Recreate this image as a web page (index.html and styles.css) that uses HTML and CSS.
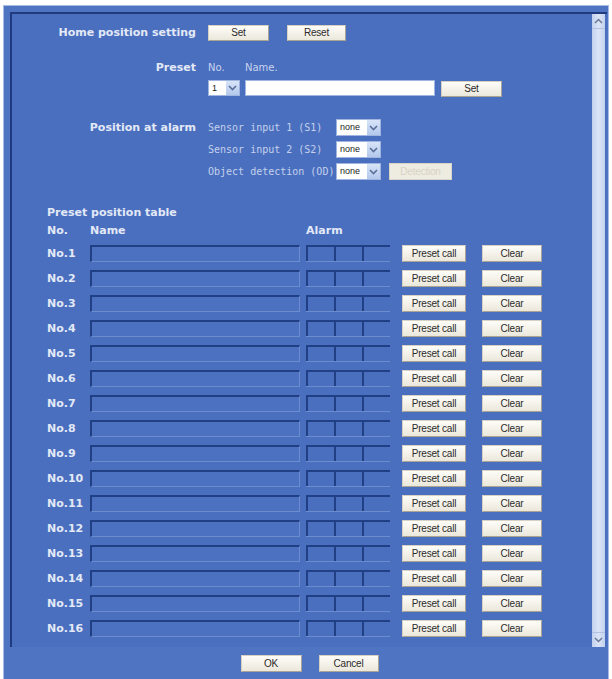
FILE: index.html
```html
<!DOCTYPE html>
<html lang="en">
<head>
<meta charset="utf-8">
<title>Preset position</title>
<link rel="stylesheet" href="styles.css">
</head>
<body>
<div class="window">
  <div class="viewport">
    <div class="content">
      <div class="settings">
        <div class="label row-home">Home position setting</div>
        <div class="controls row-home">
          <button class="btn btn-set">Set</button>
          <button class="btn btn-reset">Reset</button>
        </div>

        <div class="label row-preset">Preset</div>
        <div class="controls preset-controls">
          <div class="preset-head"><span class="col-no">No.</span><span>Name.</span></div>
          <div class="preset-line">
            <span class="select select-no"><span class="sel-val">1</span><span class="sel-arrow"><svg width="9" height="6" viewBox="0 0 9 6"><path d="M1 1l3.5 3.5L8 1" fill="none" stroke="#5a6f9a" stroke-width="1.6"/></svg></span></span>
            <span class="text-input"></span>
            <button class="btn btn-preset-set">Set</button>
          </div>
        </div>

        <div class="label row-alarm">Position at alarm</div>
        <div class="controls alarm-controls">
          <div class="alarm-line">
            <span class="sensor">Sensor input 1 (S1)</span>
            <span class="select select-none"><span class="sel-val">none</span><span class="sel-arrow"><svg width="9" height="6" viewBox="0 0 9 6"><path d="M1 1l3.5 3.5L8 1" fill="none" stroke="#5a6f9a" stroke-width="1.6"/></svg></span></span>
          </div>
          <div class="alarm-line">
            <span class="sensor">Sensor input 2 (S2)</span>
            <span class="select select-none"><span class="sel-val">none</span><span class="sel-arrow"><svg width="9" height="6" viewBox="0 0 9 6"><path d="M1 1l3.5 3.5L8 1" fill="none" stroke="#5a6f9a" stroke-width="1.6"/></svg></span></span>
          </div>
          <div class="alarm-line">
            <span class="sensor">Object detection (OD)</span>
            <span class="select select-none"><span class="sel-val">none</span><span class="sel-arrow"><svg width="9" height="6" viewBox="0 0 9 6"><path d="M1 1l3.5 3.5L8 1" fill="none" stroke="#5a6f9a" stroke-width="1.6"/></svg></span></span>
            <button class="btn btn-detection" disabled>Detection</button>
          </div>
        </div>
      </div>

      <div class="table">
        <div class="table-title">Preset position table</div>
        <div class="table-row table-head">
          <span>No.</span><span>Name</span><span>Alarm</span>
        </div>
        <div id="rows"></div>
      </div>
    </div>
    <div class="scrollbar">
      <div class="sb-up"><svg width="9" height="6" viewBox="0 0 9 6"><path d="M1 5l3.5-3.5L8 5" fill="none" stroke="#6b7a95" stroke-width="1.5"/></svg></div>
      <div class="sb-track"></div>
      <div class="sb-down"><svg width="9" height="6" viewBox="0 0 9 6"><path d="M1 1l3.5 3.5L8 1" fill="none" stroke="#6b7a95" stroke-width="1.5"/></svg></div>
    </div>
  </div>
  <div class="footer">
    <button class="btn btn-ok">OK</button>
    <button class="btn btn-cancel">Cancel</button>
  </div>
</div>
<script>
  // Build the 16 preset rows
  var rows = document.getElementById('rows');
  var html = '';
  for (var i = 1; i <= 16; i++) {
    html += '<div class="table-row">' +
      '<span class="row-no">No.' + i + '</span>' +
      '<span class="name-field"></span>' +
      '<span class="alarm-cells"><span></span><span></span><span></span></span>' +
      '<button class="btn btn-call">Preset call</button>' +
      '<button class="btn btn-clear">Clear</button>' +
      '</div>';
  }
  rows.innerHTML = html;
</script>
</body>
</html>
```

FILE: styles.css
```css
* { box-sizing: border-box; }

html, body {
  margin: 0;
  background: #ffffff;
}

body {
  padding: 5px 3px 0 3px;
  font-family: "DejaVu Sans", Verdana, sans-serif;
  font-size: 10px;
  color: #dde4f3;
}

.window {
  width: 606px;
  height: 674px;
  background: #4f74c2;
  border: 1px solid #a7bbe3;
  border-bottom: none;
  padding: 6px 1px 0 6px;
}

.viewport {
  display: flex;
  height: 635px;
  border-top: 2px solid #1f3a7e;
  border-left: 2px solid #1f3a7e;
  background: #4a6fbf;
}

.content {
  flex: 1;
}

/* ---------- upper settings ---------- */
.settings {
  display: grid;
  grid-template-columns: 184px 1fr;
  column-gap: 12px;
  padding-top: 11px;
}

.label {
  text-align: right;
  font-weight: bold;
  font-size: 11px;
  color: #e3e9f6;
  white-space: nowrap;
}

.controls {
  display: flex;
}

.row-home {
  height: 16px;
  line-height: 16px;
}

.row-home.controls { gap: 18px; }

.row-preset {
  margin-top: 20px;
  line-height: 14px;
}

.preset-controls {
  margin-top: 20px;
  flex-direction: column;
}

.preset-head {
  height: 14px;
  line-height: 14px;
  display: flex;
  color: #c9d4ee;
}

.col-no { width: 37px; }

.preset-line {
  margin-top: 5px;
  display: flex;
  align-items: flex-start;
}

.row-alarm {
  margin-top: 22px;
  line-height: 17px;
}

.alarm-controls {
  margin-top: 22px;
  flex-direction: column;
  gap: 5px;
}

.alarm-line {
  display: flex;
  height: 17px;
  align-items: center;
}

.sensor {
  width: 128px;
  font-family: "DejaVu Sans Mono", monospace;
  font-size: 10px;
  color: #c5d1ec;
  white-space: nowrap;
}

/* fake drop-down boxes */
.select {
  display: inline-flex;
  height: 17px;
  background: #ffffff;
  border: 1px solid #9fb4df;
}

.select-no { width: 32px; height: 16px; }
.select-none { width: 45px; }

.sel-val {
  flex: 1;
  padding-left: 3px;
  font-family: "Liberation Sans", Arial, sans-serif;
  font-size: 9px;
  line-height: 15px;
  color: #222;
}

.sel-arrow {
  width: 13px;
  background: linear-gradient(#d8e4f8, #b3c8ec);
  display: flex;
  align-items: center;
  justify-content: center;
}

.text-input {
  width: 190px;
  height: 16px;
  margin-left: 5px;
  background: #ffffff;
  border: 1px solid #9fb4df;
}

/* ---------- buttons ---------- */
.btn {
  display: inline-block;
  padding: 0;
  margin: 0;
  font-family: "Liberation Sans", Arial, sans-serif;
  font-size: 10px;
  color: #2b2b2b;
  background: linear-gradient(#fefdf9, #ebe7db);
  border: 1px solid #d6d1c2;
  border-bottom-color: #a9a493;
  border-right-color: #a9a493;
  height: 16px;
  line-height: 14px;
  text-align: center;
  letter-spacing: -0.2px;
}

.btn-set { width: 61px; }
.btn-reset { width: 59px; }
.btn-preset-set { width: 61px; margin-left: 6px; margin-top: 1px; }

.btn-detection {
  width: 63px;
  height: 17px;
  margin-left: 8px;
  color: #d8d3c4;
  background: #eeebe1;
  border-color: #d8d4c8;
}

/* ---------- preset table ---------- */
.table {
  margin-top: 26px;
  padding-left: 35px;
}

.table-title {
  font-weight: bold;
  font-size: 11px;
  line-height: 14px;
  color: #e3e9f6;
}

.table-row {
  display: grid;
  grid-template-columns: 43px 216px 96px 80px 60px;
  align-items: center;
}

.table-head {
  margin-top: 4px;
  height: 14px;
  line-height: 14px;
  font-weight: bold;
  font-size: 11px;
  color: #e3e9f6;
  margin-bottom: 7px;
}

#rows {
  display: flex;
  flex-direction: column;
  gap: 8px;
}

#rows .table-row { height: 17px; }

.row-no {
  font-weight: bold;
  font-size: 11px;
  color: #e3e9f6;
  white-space: nowrap;
}

.name-field {
  width: 210px;
  height: 17px;
  border-top: 2px solid #213f85;
  border-left: 2px solid #213f85;
  border-bottom: 1px solid #6c8ccd;
  border-right: 1px solid #6c8ccd;
  background: #4c71c0;
}

.alarm-cells {
  display: flex;
  width: 84px;
  height: 17px;
  border-top: 2px solid #213f85;
  border-bottom: 1px solid #6c8ccd;
}

.alarm-cells span {
  flex: 1;
  border-left: 2px solid #213f85;
}

.btn-call { width: 64px; height: 17px; }
.btn-clear { width: 60px; height: 17px; }

/* ---------- scrollbar ---------- */
.scrollbar {
  width: 13px;
  margin: 0 2px 0 0;
  display: flex;
  flex-direction: column;
  background: linear-gradient(90deg, #c3d1ee, #dbe4f6 50%, #c3d1ee);
}

.sb-up, .sb-down {
  height: 15px;
  display: flex;
  align-items: center;
  justify-content: center;
}

.sb-up { border-bottom: 1px solid #b3c2e2; }
.sb-down { border-top: 1px solid #b3c2e2; }

.sb-track { flex: 1; }

/* ---------- dialog footer ---------- */
.footer {
  display: flex;
  justify-content: center;
  gap: 17px;
  margin-top: 8px;
  padding-left: 2px;
}

.btn-ok { width: 61px; height: 17px; }
.btn-cancel { width: 60px; height: 17px; }
```
